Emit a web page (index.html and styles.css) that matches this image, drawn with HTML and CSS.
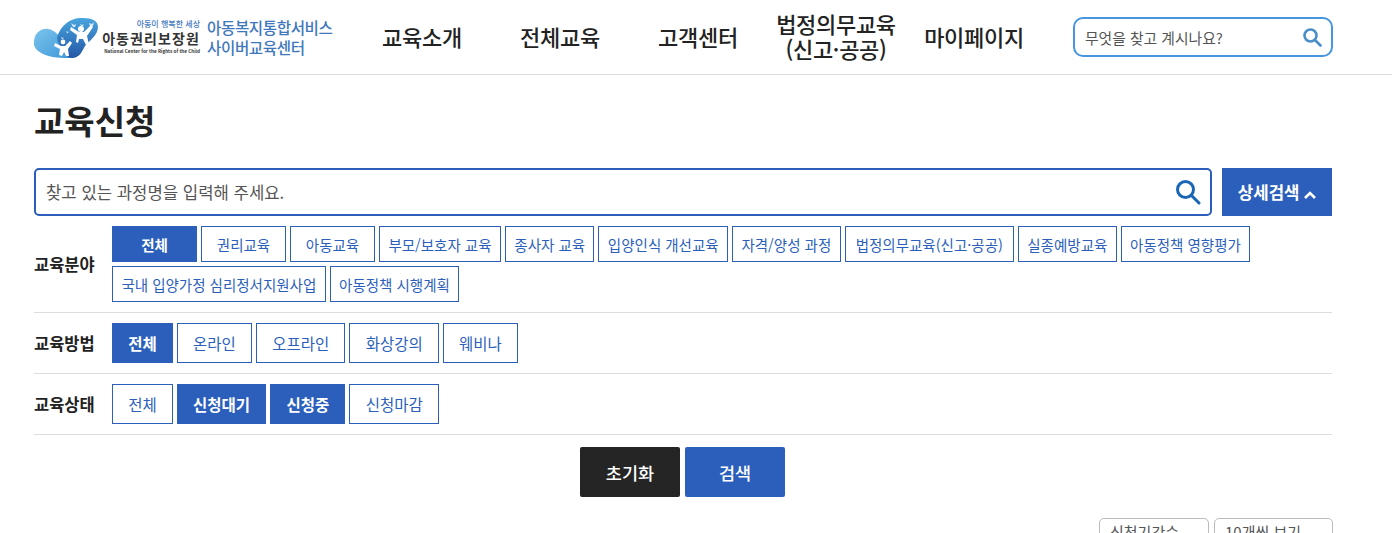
FILE: index.html
```html
<!DOCTYPE html>
<html lang="ko">
<head>
    <meta charset="UTF-8">
    <title>교육신청</title>
    <link rel="stylesheet" href="styles.css">
</head>
<body>
    <header class="header">
        <a class="logo">
            <svg class="logo-mark" viewBox="0 0 68 42" width="68" height="42">
                <defs>
                    <linearGradient id="blob" x1="0" y1="0" x2="0" y2="1">
                        <stop offset="0" stop-color="#48a6de"/>
                        <stop offset="1" stop-color="#2456a6"/>
                    </linearGradient>
                    <linearGradient id="lobe" x1="0" y1="0" x2="1" y2="1">
                        <stop offset="0" stop-color="#7cc3ec"/>
                        <stop offset="1" stop-color="#3c97d8"/>
                    </linearGradient>
                </defs>
                <path d="M1 24C2 15 9 11 15 12c7 1 12 7 15 14 2 6 6 12 10 15-12 0-22 0-30-4C4 34 0 30 1 24z" fill="url(#lobe)"/>
                <path d="M24 20C28 8 38 0 50 1c9 0 15 3 15 9 0 8-8 13-13 19-3 5-5 12-13 12-5 0-8-5-11-11-2-3-4-6-4-10z" fill="url(#blob)"/>
                <path d="M43 25l1-7-7-5 1-3 8 5h5l7-7 2 2-6 9 2 8-3 1-3-6-4 0-1 4z" fill="#fff"/>
                <circle cx="48" cy="12" r="3" fill="#fff"/>
                <path d="M26 38l1-6-6-3 1-3 6 3h4l5-5 2 2-4 6 1 7-3 0-2-4-2 4z" fill="#fff"/>
                <circle cx="30" cy="25" r="2.4" fill="#fff"/>
                <path d="M38 6l3 2 2-1-1 3h-2zM47 7l2 1 2-1-1 2h-2zM56 6l3 1 2-2-1 4h-3zM33 14l2 1 1-1-1 2h-1zM28 20l2 1 1-1-1 2h-1z" fill="#d5ecfa"/>
            </svg>
            <span class="logo-org">
                <span class="logo-slogan">아동이 행복한 세상</span>
                <span class="logo-name">아동권리보장원</span>
                <span class="logo-en">National Center for the Rights of the Child</span>
            </span>
            <span class="logo-title">아동복지통합서비스<br>사이버교육센터</span>
        </a>
        <nav class="gnb">
            <a>교육소개</a>
            <a>전체교육</a>
            <a>고객센터</a>
            <a>법정의무교육<br>(신고·공공)</a>
            <a>마이페이지</a>
        </nav>
        <div class="top-search">
            <span>무엇을 찾고 계시나요?</span>
            <svg viewBox="0 0 20 20" width="20" height="20" fill="none" stroke="#4a8fc9" stroke-width="2.6">
                <circle cx="8.5" cy="8.5" r="6"/>
                <path d="M13 13l5.5 5.5" stroke-linecap="round"/>
            </svg>
        </div>
    </header>

    <main class="content">
        <h1 class="page-title">교육신청</h1>

        <div class="search-row">
            <div class="search-box">
                <span>찾고 있는 과정명을 입력해 주세요.</span>
                <svg viewBox="0 0 26 26" width="26" height="26" fill="none" stroke="#1a66b5" stroke-width="3">
                    <circle cx="10.5" cy="10.5" r="8"/>
                    <path d="M16.5 16.5l7.5 7.5" stroke-linecap="round"/>
                </svg>
            </div>
            <button class="detail-btn">상세검색
                <svg viewBox="0 0 12 8" width="12" height="8" fill="none" stroke="#fff" stroke-width="2.6"><path d="M1 7l5-5 5 5"/></svg>
            </button>
        </div>

        <div class="filter">
            <div class="filter-label">교육분야</div>
            <div class="chips chips-small">
                <a class="chip on">전체</a>
                <a class="chip">권리교육</a>
                <a class="chip">아동교육</a>
                <a class="chip">부모/보호자 교육</a>
                <a class="chip">종사자 교육</a>
                <a class="chip">입양인식 개선교육</a>
                <a class="chip">자격/양성 과정</a>
                <a class="chip chip-law">법정의무교육(신고·공공)</a>
                <a class="chip">실종예방교육</a>
                <a class="chip">아동정책 영향평가</a>
                <a class="chip">국내 입양가정 심리정서지원사업</a>
                <a class="chip">아동정책 시행계획</a>
            </div>
        </div>
        <div class="filter">
            <div class="filter-label">교육방법</div>
            <div class="chips">
                <a class="chip on">전체</a>
                <a class="chip">온라인</a>
                <a class="chip">오프라인</a>
                <a class="chip">화상강의</a>
                <a class="chip">웨비나</a>
            </div>
        </div>
        <div class="filter">
            <div class="filter-label">교육상태</div>
            <div class="chips">
                <a class="chip">전체</a>
                <a class="chip on">신청대기</a>
                <a class="chip on">신청중</a>
                <a class="chip">신청마감</a>
            </div>
        </div>

        <div class="actions">
            <button class="btn btn-dark">초기화</button>
            <button class="btn btn-blue">검색</button>
        </div>

        <div class="list-tools">
            <div class="select select-sort">신청기간순</div>
            <div class="select select-count">10개씩 보기</div>
        </div>
    </main>
</body>
</html>
```

FILE: styles.css
```css
* {
    box-sizing: border-box;
}
html, body {
    height: 533px;
    overflow: hidden;
}
body {
    margin: 0;
    background: #fff;
    color: #222;
    font-family: "Noto Sans CJK KR", "Noto Sans", sans-serif;
}
button {
    font-family: inherit;
    border: none;
    cursor: pointer;
}

.header {
    height: 75px;
    display: flex;
    align-items: center;
    padding: 0 59px 0 33px;
    border-bottom: 1px solid #ddd;
}
.logo {
    display: flex;
    align-items: center;
    width: 321px;
}
.logo-mark {
    flex: none;
    margin-top: 2px;
}
.logo-org {
    display: flex;
    flex-direction: column;
    align-items: flex-end;
    margin-left: 1px;
    width: 98px;
    color: #333;
}
.logo-slogan {
    font-size: 8px;
    line-height: 10px;
    font-weight: 500;
    color: #3f78bd;
}
.logo-name {
    font-size: 14px;
    line-height: 18px;
    font-weight: 700;
    letter-spacing: 1.1px;
    white-space: nowrap;
}
.logo-en {
    font-size: 4.6px;
    line-height: 8px;
    font-weight: 700;
    white-space: nowrap;
}
.logo-title {
    margin-left: 7px;
    font-size: 15.6px;
    line-height: 20px;
    font-weight: 500;
    letter-spacing: -0.4px;
    color: #3f78bd;
    white-space: nowrap;
}
.gnb {
    display: flex;
    align-items: center;
    width: 719px;
    margin: -2px 0 0 -1px;
}
.gnb a {
    width: 138px;
    text-align: center;
    font-size: 22px;
    line-height: 25px;
    font-weight: 500;
    letter-spacing: -0.3px;
    color: #222;
    white-space: nowrap;
}
.top-search {
    width: 260px;
    height: 40px;
    margin-left: 1px;
    display: flex;
    align-items: center;
    justify-content: space-between;
    padding: 0 9px 0 10px;
    border: 2px solid #4596de;
    border-radius: 10px;
    font-size: 14.8px;
    color: #555;
}

.content {
    padding: 0 60px 0 34px;
}
.page-title {
    margin: 22px 0 0;
    font-size: 33px;
    line-height: 46px;
    font-weight: 700;
    color: #222;
}
.search-row {
    display: flex;
    gap: 10px;
    margin-top: 25px;
}
.search-box {
    flex: 1;
    height: 48px;
    display: flex;
    align-items: center;
    justify-content: space-between;
    padding: 0 9px 0 10px;
    border: 2px solid #2b5fbb;
    border-radius: 5px;
    font-size: 16.7px;
    color: #555;
}
.detail-btn {
    width: 110px;
    height: 48px;
    background: #2b5fbb;
    color: #fff;
    font-size: 16.8px;
    font-weight: 700;
}

.filter {
    display: flex;
    align-items: center;
    padding: 10px 0;
    border-bottom: 1px solid #ddd;
}
.filter-label {
    flex: none;
    width: 78px;
    margin-top: -1px;
    font-size: 16.5px;
    line-height: 22px;
    font-weight: 700;
    color: #222;
}
.chips {
    display: flex;
    flex-wrap: wrap;
    gap: 4px;
}
.chip {
    height: 40px;
    min-width: 60px;
    display: flex;
    align-items: center;
    justify-content: center;
    padding: 0 15.2px;
    border: 1px solid #2b5fbb;
    background: #fff;
    color: #2b5fbb;
    font-size: 15.5px;
    white-space: nowrap;
}
.chip.on {
    background: #2b5fbb;
    color: #fff;
    font-weight: 700;
}
.chips-small .chip {
    height: 36px;
    min-width: 85px;
    padding: 0 8.4px;
    font-size: 14.5px;
}
.chips-small .chip-law {
    padding: 0 10px;
}

.actions {
    display: flex;
    justify-content: center;
    gap: 5px;
    margin-top: 12px;
    padding-right: 1px;
}
.btn {
    width: 100px;
    height: 50px;
    border-radius: 2px;
    color: #fff;
    font-size: 17.5px;
    font-weight: 500;
}
.btn-dark {
    background: #252525;
}
.btn-blue {
    background: #2b5fbb;
}

.list-tools {
    display: flex;
    justify-content: flex-end;
    gap: 5px;
    margin: 21px -1px 0 0;
}
.select {
    height: 40px;
    padding: 2px 10px;
    border: 1px solid #bbb;
    border-radius: 5px;
    font-size: 15px;
    color: #555;
    white-space: nowrap;
}
.select-sort {
    width: 110px;
}
.select-count {
    width: 119px;
}
```
